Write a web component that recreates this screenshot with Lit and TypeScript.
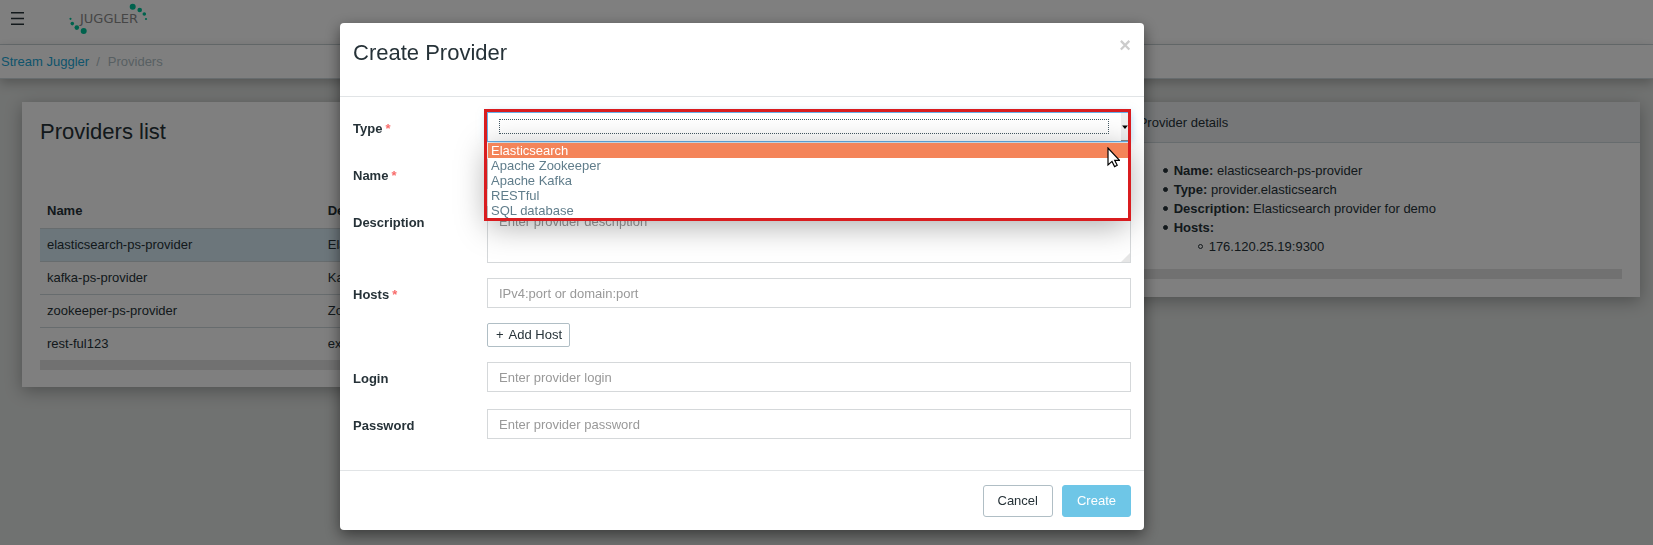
import { LitElement, html, css, svg } from "lit";
import { customElement, state } from "lit/decorators.js";

interface Provider {
  name: string;
  description: string;
}

const PROVIDERS: Provider[] = [
  { name: "elasticsearch-ps-provider", description: "Elasticsearch provider for demo" },
  { name: "kafka-ps-provider", description: "Kafka provider for demo" },
  { name: "zookeeper-ps-provider", description: "Zookeeper provider for demo" },
  { name: "rest-ful123", description: "example" },
];

const TYPES = ["Elasticsearch", "Apache Zookeeper", "Apache Kafka", "RESTful", "SQL database"];

const base = css`
  :host {
    display: block;
    font: 13px/20px "Liberation Sans", Arial, sans-serif;
    color: #263238;
  }
  *,
  *::before,
  *::after {
    box-sizing: border-box;
  }
  button,
  input,
  select,
  textarea {
    font: inherit;
    color: inherit;
    margin: 0;
  }
  h1,
  h2,
  ul,
  ol {
    margin: 0;
    padding: 0;
    font-size: 13px;
    font-weight: normal;
  }
  .title {
    font-size: 22px;
    line-height: 24px;
  }
`;

@customElement("app-header")
class AppHeader extends LitElement {
  static styles = [
    base,
    css`
      .bar {
        display: flex;
        align-items: flex-start;
        height: 45px;
        border-bottom: 1px solid #cfd8dc;
        background: #fff;
      }
      .menu {
        display: flex;
        padding: 10px;
        border: 0;
        background: none;
      }
      .logo {
        margin-left: 32px;
      }
      .crumbs {
        display: flex;
        gap: 7px;
        height: 34px;
        padding: 7px 1px;
        border-bottom: 1px solid #cfd8dc;
        background: #fff;
        list-style: none;
        box-shadow: 0 4px 12px rgba(0, 0, 0, 0.25);
      }
      .crumbs a {
        color: #20a8d8;
        text-decoration: none;
      }
      .sep,
      .here {
        color: #b0bec5;
      }
      .here {
        padding-left: 1px;
      }
    `,
  ];

  render() {
    const dots = [
      [64.7, 6.7, 3], [71.7, 10, 2.3], [76.3, 14, 1.8], [78, 19, 1.1],
      [2.5, 18.8, 1.1], [4.3, 23.6, 1.8], [8.8, 27.6, 2.3], [15.7, 31, 3],
    ];
    return html`
      <header class="bar">
        <button class="menu" aria-label="Toggle menu">
          <svg width="16" height="16" viewBox="0 0 16 16" stroke="#263238" stroke-width="1.6">
            <path d="M1 2.700h13M1 8.500h13M1 14.300h13" />
          </svg>
        </button>
        <svg class="logo" width="84" height="36" viewBox="0 0 84 36" role="img" aria-label="Juggler">
          ${dots.map(([x, y, r]) => svg`<circle cx=${x} cy=${y} r=${r} fill="#00c49a" />`)}
          <text x="41" y="23" text-anchor="middle" font-family="DejaVu Sans" font-size="13" fill="#8c8c8c">JUGGLER</text>
        </svg>
      </header>
      <ol class="crumbs">
        <li><a href="#">Stream Juggler</a></li>
        <li class="sep">/</li>
        <li class="here">Providers</li>
      </ol>
    `;
  }
}

@customElement("providers-page")
class ProvidersPage extends LitElement {
  static styles = [
    base,
    css`
      .page {
        display: grid;
        grid-template-columns: 2fr 1fr;
        column-gap: 60px;
        align-items: start;
        padding: 23px 13px 40px 22px;
      }
      .card {
        background: #fff;
        box-shadow: 0 4px 16px rgba(0, 0, 0, 0.3);
      }
      .list {
        padding: 18px 18px 17px;
      }
      .table {
        width: 100%;
        margin-top: 51px;
        border-collapse: collapse;
        text-align: left;
      }
      th,
      td {
        height: 33px;
        padding: 6px 7px;
      }
      td {
        border-top: 1px solid #cfd8dc;
      }
      .first {
        width: 28%;
      }
      .selected {
        background: #d9edf7;
      }
      .scroll {
        height: 10px;
        background: #e2e2e2;
      }
      .head {
        padding: 11px 18px 9px;
        border-bottom: 1px solid #cfd8dc;
        background: #eceff1;
      }
      .details {
        padding: 18px;
      }
      .details ul {
        padding-left: 35px;
        line-height: 19px;
        list-style: none;
      }
      .details li::before {
        content: "";
        display: inline-block;
        width: 5px;
        height: 5px;
        margin: 0 6px 0 -11px;
        border: 1px solid #263238;
        border-radius: 50%;
        background: #263238;
        vertical-align: 2px;
      }
      .details .inner li::before {
        background: none;
      }
      .details .scroll {
        margin-top: 13px;
      }
    `,
  ];

  render() {
    return html`
      <main class="page">
        <section class="card list">
          <h1 class="title">Providers list</h1>
          <table class="table">
            <thead>
              <tr>
                <th class="first">Name</th>
                <th>Description</th>
              </tr>
            </thead>
            <tbody>
              ${PROVIDERS.map(
                (p, i) => html`<tr class=${i === 0 ? "selected" : ""}>
                  <td>${p.name}</td>
                  <td>${p.description}</td>
                </tr>`
              )}
            </tbody>
          </table>
          <div class="scroll"></div>
        </section>
        <section class="card">
          <h2 class="head">Provider details</h2>
          <div class="details">
            <ul>
              <li><b>Name:</b> elasticsearch-ps-provider</li>
              <li><b>Type:</b> provider.elasticsearch</li>
              <li><b>Description:</b> Elasticsearch provider for demo</li>
              <li><b>Hosts:</b>
                <ul class="inner">
                  <li>176.120.25.19:9300</li>
                </ul>
              </li>
            </ul>
            <div class="scroll"></div>
          </div>
        </section>
      </main>
    `;
  }
}

@customElement("create-provider-dialog")
class CreateProviderDialog extends LitElement {
  @state() private active = 0;

  static styles = [
    base,
    css`
      .dialog {
        border-radius: 4px;
        background: #fff;
        box-shadow: 0 5px 15px rgba(0, 0, 0, 0.5);
      }
      .head {
        display: flex;
        justify-content: space-between;
        align-items: flex-start;
        height: 74px;
        padding: 18px 13px;
        border-bottom: 1px solid #e1e4e6;
      }
      .close {
        padding: 0;
        border: 0;
        background: none;
        color: #ccc;
        font-weight: bold;
        font-size: 20px;
        line-height: 8px;
      }
      .body {
        display: grid;
        gap: 17px;
        padding: 15px 13px 31px;
      }
      .row {
        display: grid;
        grid-template-columns: 134px 1fr;
        align-items: start;
      }
      .row label {
        padding-top: 7px;
        font-weight: bold;
      }
      .req {
        margin-left: 3px;
        color: #f86c6b;
      }
      .stack {
        display: grid;
        gap: 15px;
      }
      .input {
        display: block;
        width: 100%;
        height: 30px;
        padding: 4px 11px;
        border: 1px solid #d5d8da;
        border-radius: 0;
        background: #fff;
        outline: 0;
      }
      .input::placeholder {
        color: #999;
        opacity: 1;
      }
      .area {
        height: 57px;
        padding: 5px 11px;
        resize: none;
      }
      .wrap {
        position: relative;
      }
      .select {
        appearance: none;
        border-color: #66afe9;
        box-shadow: 0 0 8px rgba(102, 175, 233, 0.5);
      }
      .focus {
        position: absolute;
        inset: 7px 22px 8px 12px;
        border: 1px dotted #455a64;
        pointer-events: none;
      }
      .arrow {
        position: absolute;
        inset: 1px 3px 1px auto;
        border-bottom: 1px solid #888;
        background: #efefef;
      }
      .menu {
        position: absolute;
        z-index: 1;
        inset: 31px 3px auto 1px;
        background: #fff;
        border-bottom: 1px solid #5a1010;
        box-shadow: 0 6px 32px rgba(0, 0, 0, 0.35);
        list-style: none;
        color: #607d8b;
        line-height: 15px;
      }
      .menu li {
        padding: 0 3px;
      }
      .menu .on {
        background: #f48459;
        color: #fff;
      }
      .frame {
        position: absolute;
        z-index: 2;
        inset: -3px 0 -79px -3px;
        border: 3px solid #d91c1f;
        pointer-events: none;
      }
      .pointer {
        position: absolute;
        z-index: 3;
        top: 35px;
        right: 11px;
        pointer-events: none;
      }
      .grip {
        position: absolute;
        right: 1px;
        bottom: 1px;
      }
      .add {
        justify-self: start;
        height: 24px;
        padding: 0 7px 0 8px;
        border: 1px solid #b0bec5;
        border-radius: 2px;
        background: #fff;
      }
      .add span {
        margin-right: 5px;
      }
      .foot {
        display: flex;
        justify-content: flex-end;
        gap: 9px;
        padding: 14px 13px 13px;
        border-top: 1px solid #e1e4e6;
      }
      .btn {
        height: 32px;
        padding: 0 14px;
        border: 1px solid #b0bec5;
        border-radius: 3px;
        background: #fff;
      }
      .primary {
        border-color: #6ec6e7;
        background: #6ec6e7;
        color: #fff;
      }
    `,
  ];

  private label(id: string, text: string, required = false) {
    return html`<label for=${id}>${text}${required ? html`<span class="req">*</span>` : ""}</label>`;
  }

  render() {
    return html`
      <section class="dialog" role="dialog" aria-label="Create Provider">
        <header class="head">
          <h2 class="title">Create Provider</h2>
          <button class="close" aria-label="Close">×</button>
        </header>
        <form class="body">
          <div class="row">
            ${this.label("type", "Type", true)}
            <div class="wrap">
              <select class="input select" id="type">
                <option></option>
                ${TYPES.map((t) => html`<option>${t}</option>`)}
              </select>
              <div class="focus"></div>
              <svg class="arrow" width="7" height="28" viewBox="0 0 7 28"><path d="M1 13h6L4 16.500z" fill="#000" /></svg>
              <ul class="menu">
                ${TYPES.map(
                  (t, i) => html`<li class=${i === this.active ? "on" : ""} @mouseenter=${() => (this.active = i)}>${t}</li>`
                )}
              </ul>
              <div class="frame"></div>
              <svg class="pointer" width="14" height="21" viewBox="0 0 14 21">
                <path d="M2 1v17l4-3.600 2.600 5.200 2.600-1.300-2.500-5H13.500z" fill="#fff" stroke="#000" stroke-width="1.200" />
              </svg>
            </div>
          </div>
          <div class="row">
            ${this.label("name", "Name", true)}
            <input class="input" id="name" />
          </div>
          <div class="stack">
            <div class="row">
              ${this.label("description", "Description")}
              <div class="wrap">
                <textarea class="input area" id="description" placeholder="Enter provider description"></textarea>
                <svg class="grip" width="9" height="9" viewBox="0 0 9 9"><path d="M9 0v9H0z" fill="#e6e6e6" /></svg>
              </div>
            </div>
            <div class="row">
              ${this.label("hosts", "Hosts", true)}
              <div class="stack">
                <input class="input" id="hosts" placeholder="IPv4:port or domain:port" />
                <button type="button" class="add"><span>+</span>Add Host</button>
              </div>
            </div>
            <div class="row">
              ${this.label("login", "Login")}
              <input class="input" id="login" placeholder="Enter provider login" />
            </div>
          </div>
          <div class="row">
            ${this.label("password", "Password")}
            <input class="input" id="password" type="password" placeholder="Enter provider password" />
          </div>
        </form>
        <footer class="foot">
          <button class="btn">Cancel</button>
          <button class="btn primary">Create</button>
        </footer>
      </section>
    `;
  }
}

@customElement("app-root")
class AppRoot extends LitElement {
  static styles = css`
    :host {
      display: block;
      min-height: 100vh;
      background: #e1e4e2;
    }
    app-header {
      position: relative;
    }
    .overlay {
      position: fixed;
      inset: 0;
      padding: 23px 169px 0 0;
      background: rgba(0, 0, 0, 0.5);
    }
    .box {
      max-width: 804px;
      margin: 0 auto;
    }
  `;

  render() {
    return html`
      <app-header></app-header>
      <providers-page></providers-page>
      <div class="overlay">
        <create-provider-dialog class="box"></create-provider-dialog>
      </div>
    `;
  }
}
